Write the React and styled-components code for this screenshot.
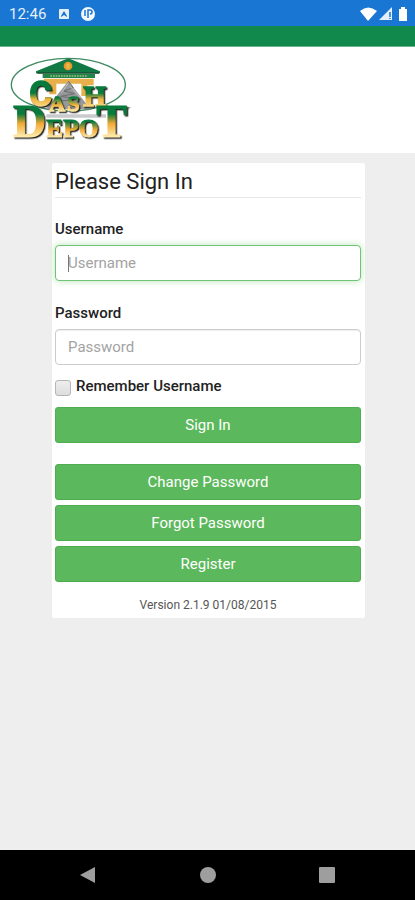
import React from "react"
import styled, { createGlobalStyle } from "styled-components"

const GlobalStyle = createGlobalStyle`
  * {
    box-sizing: border-box;
  }
  body {
    margin: 0;
    background: #eee;
    color: #222;
    font-family: Roboto, "Liberation Sans", sans-serif;
    font-size: 15px;
    line-height: 20px;
  }
`

const Page = styled.div`
  display: flex;
  flex-direction: column;
  min-height: 100vh;
`

const StatusBar = styled.div`
  display: flex;
  align-items: center;
  justify-content: space-between;
  height: 26px;
  padding: 2px 6px 0 9px;
  background: #1976d2;
  color: #e4effa;
`

const StatusGroup = styled.div`
  display: flex;
  align-items: center;
  gap: ${({ $gap }) => $gap}px;
`

const Clock = styled.span`
  margin-right: 2px;
  font-size: 15px;
`

const GreenStrip = styled.div`
  height: 21px;
  background: #12894c;
  border-bottom: 1px solid #6bb48d;
`

const Header = styled.header`
  height: 106px;
  background: #fff;
`

const LogoSvg = styled.svg`
  display: block;
`

const LogoLetters = styled.g`
  font-family: "Liberation Serif", serif;
  font-weight: 700;
  filter: drop-shadow(4px 4px 0 #272822);
`

const Main = styled.main`
  flex: 1;
  padding: 10px 50px 10px 52px;
`

const Card = styled.form`
  display: flex;
  flex-direction: column;
  padding: 4px 4px 3px 3px;
  background: #fff;
  border-radius: 2px;
`

const Title = styled.h1`
  margin: 0 0 21px;
  padding-bottom: 1px;
  border-bottom: 1px solid #e8e8e8;
  font-size: 22px;
  font-weight: 400;
  line-height: 29px;
`

const Label = styled.label`
  font-weight: 500;
`

const InputWrap = styled.div`
  position: relative;
  margin: 6px 0 ${({ $gap }) => $gap}px;
`

const Caret = styled.span`
  position: absolute;
  top: 10px;
  left: 13px;
  width: 1px;
  height: 17px;
  background: #777;
`

const Input = styled.input`
  display: block;
  width: 100%;
  height: 36px;
  padding: 0 12px;
  border: 1px solid ${({ $active }) => ($active ? "#6fc276" : "#ccc")};
  border-radius: 4px;
  outline: none;
  background: #fff;
  box-shadow: ${({ $active }) => ($active ? "0 0 6px 1px #c9ecc9" : "inset 0 1px 1px #eee")};
  color: #555;
  font-family: inherit;
  font-size: 15px;
  &::placeholder {
    color: #a3a3a3;
    opacity: 1;
  }
`

const Remember = styled.div`
  display: flex;
  align-items: center;
  gap: 5px;
  margin-bottom: 11px;
`

const Checkbox = styled.input`
  appearance: none;
  width: 16px;
  height: 16px;
  margin: 4px 0 0;
  border: 1px solid #b5b5b5;
  border-radius: 3px;
  background: linear-gradient(#eee, #ddd);
  &:checked {
    background: #5cb85c;
  }
`

const Button = styled.button`
  height: 36px;
  margin-bottom: ${({ $gap }) => $gap}px;
  padding: 0;
  border: 1px solid #4cae4c;
  border-radius: 3px;
  background: #5cb85c;
  color: #fff;
  font-family: inherit;
  font-size: 15px;
`

const Version = styled.p`
  margin: 8px 0 0;
  color: #555;
  font-size: 12px;
  text-align: center;
`

const NavBar = styled.nav`
  display: flex;
  align-items: center;
  justify-content: center;
  gap: 88px;
  height: 50px;
  background: #000;
`

const NavButton = styled.button`
  width: 32px;
  height: 32px;
  padding: 7px;
  border: 0;
  background: none;
`

const Logo = () => (
  <LogoSvg width="140" height="106" viewBox="0 3 420 318" role="img" aria-label="Cash Depot">
    <defs>
      <linearGradient id="upper" gradientUnits="userSpaceOnUse" x1="0" y1="105" x2="0" y2="196">
        <stop offset="0.4" stopColor="#087b3c" />
        <stop offset="0.6" stopColor="#f0b33d" />
        <stop offset="1" stopColor="#fff0b6" />
      </linearGradient>
      <linearGradient id="small" gradientUnits="userSpaceOnUse" x1="0" y1="145" x2="0" y2="198">
        <stop offset="0.2" stopColor="#087b3c" />
        <stop offset="0.6" stopColor="#f0b33d" />
        <stop offset="1" stopColor="#fff0b6" />
      </linearGradient>
      <linearGradient id="lower" gradientUnits="userSpaceOnUse" x1="0" y1="180" x2="0" y2="275">
        <stop offset="0.25" stopColor="#087b3c" />
        <stop offset="0.55" stopColor="#f0a934" />
        <stop offset="1" stopColor="#fff0b6" />
      </linearGradient>
      <linearGradient id="lowerSmall" gradientUnits="userSpaceOnUse" x1="0" y1="215" x2="0" y2="275">
        <stop offset="0.2" stopColor="#087b3c" />
        <stop offset="0.6" stopColor="#f0a934" />
        <stop offset="1" stopColor="#fff0b6" />
      </linearGradient>
    </defs>
    <ellipse cx="205" cy="116" rx="171" ry="79" fill="none" stroke="#408a62" strokeWidth="4" />
    <path d="M132 98H281V118H262V150H244V113H169V145H148V112H132Z" fill="#e8b04a" />
    <path d="M108 76L190 43Q205 33 220 43L300 76V82H108Z" fill="#117944" />
    <path d="M112 81H297" stroke="#174f32" strokeWidth="4" />
    <path d="M128 84H285V96H128Z" fill="#20854a" />
    <path d="M151 90H262" stroke="#a5bb7c" strokeWidth="4" strokeDasharray="5 3" />
    <circle cx="204" cy="60" r="13" fill="#e49a2b" />
    <path d="M197 57H211M197 63H211M204 51V70" stroke="#f5cf68" strokeWidth="2" />
    <path d="M205 105L272 190H138Z" fill="#969899" />
    <path d="M205 105L220 125L192 135L223 143L182 151L242 160L165 166" fill="none" stroke="#6c6f70" strokeWidth="3" />
    <path d="M205 112L184 140M210 121L242 155" stroke="#c4c6c6" strokeWidth="3" />
    <path d="M139 205H318V215H139Z" fill="#c8cacb" />
    <LogoLetters fill="url(#upper)" stroke="url(#upper)" strokeWidth="4">
      <text x="88" y="180" fontSize="104" fontFamily="Roboto, sans-serif">C</text>
      <text x="250" y="180" fontSize="88">H</text>
    </LogoLetters>
    <LogoLetters fill="url(#small)" stroke="url(#small)" strokeWidth="4">
      <text x="148" y="194" fontSize="66">A</text>
      <text x="202" y="194" fontSize="66">S</text>
    </LogoLetters>
    <LogoLetters fill="url(#lower)" stroke="url(#lower)" strokeWidth="3">
      <text x="39" y="273" fontSize="138">D</text>
      <text x="289" y="273" fontSize="138">T</text>
    </LogoLetters>
    <LogoLetters fill="url(#lowerSmall)" stroke="url(#lowerSmall)" strokeWidth="3">
      <text x="139" y="273" fontSize="76">E</text>
      <text x="190" y="273" fontSize="76">P</text>
      <text x="236" y="273" fontSize="76">O</text>
    </LogoLetters>
    <path d="M382 185H391M386 185V191" stroke="#555" strokeWidth="2" />
  </LogoSvg>
)

const App = () => {
  return (
    <Page>
      <GlobalStyle />
      <StatusBar>
        <StatusGroup $gap={10}>
          <Clock>12:46</Clock>
          <svg width="12" height="12" viewBox="0 0 12 12">
            <rect x="1" y="1" width="10" height="10" rx="1" fill="#e4effa" />
            <path d="M3 9V8L6 3L9 8V9L6 7Z" fill="#1976d2" />
          </svg>
          <svg width="16" height="16" viewBox="0 0 16 16">
            <circle cx="8" cy="8" r="7" fill="#f2f8fd" />
            <path d="M5 4V10M8 12V4H10Q12 4 12 6Q12 8 10 8" fill="none" stroke="#1976d2" strokeWidth="1.5" />
          </svg>
        </StatusGroup>
        <StatusGroup $gap={2}>
          <svg width="17" height="14" viewBox="0 0 17 14">
            <path d="M0 4Q8 -3 17 4L8 14Z" fill="#fff" />
          </svg>
          <svg width="14" height="14" viewBox="0 0 14 14">
            <path d="M0 13L13 0V13Z" fill="#e4effa" />
            <path d="M11 5V10M11 11V12" stroke="#1976d2" strokeWidth="1.5" />
          </svg>
          <svg width="14" height="14" viewBox="0 0 14 14">
            <path d="M4 2H6V0H10V2H12V14H4Z" fill="#fff" />
          </svg>
        </StatusGroup>
      </StatusBar>
      <GreenStrip />
      <Header>
        <Logo />
      </Header>
      <Main>
        <Card onSubmit={(e) => e.preventDefault()}>
          <Title>Please Sign In</Title>
          <Label htmlFor="username">Username</Label>
          <InputWrap $gap={22}>
            <Input id="username" placeholder="Username" $active />
            <Caret />
          </InputWrap>
          <Label htmlFor="password">Password</Label>
          <InputWrap $gap={11}>
            <Input id="password" type="password" placeholder="Password" />
          </InputWrap>
          <Remember>
            <Checkbox id="remember" type="checkbox" />
            <Label htmlFor="remember">Remember Username</Label>
          </Remember>
          <Button type="submit" $gap={21}>
            Sign In
          </Button>
          <Button type="button" $gap={5}>
            Change Password
          </Button>
          <Button type="button" $gap={5}>
            Forgot Password
          </Button>
          <Button type="button" $gap={5}>
            Register
          </Button>
          <Version>Version 2.1.9 01/08/2015</Version>
        </Card>
      </Main>
      <NavBar>
        <NavButton aria-label="Back">
          <svg width="18" height="18" viewBox="0 0 18 18">
            <path d="M1 9L16 1V17Z" fill="#9e9e9e" />
          </svg>
        </NavButton>
        <NavButton aria-label="Home">
          <svg width="18" height="18" viewBox="0 0 18 18">
            <circle cx="9" cy="9" r="8" fill="#9e9e9e" />
          </svg>
        </NavButton>
        <NavButton aria-label="Recent apps">
          <svg width="18" height="18" viewBox="0 0 18 18">
            <rect x="0" y="1" width="16" height="16" rx="1" fill="#9e9e9e" />
          </svg>
        </NavButton>
      </NavBar>
    </Page>
  )
}

export default App
